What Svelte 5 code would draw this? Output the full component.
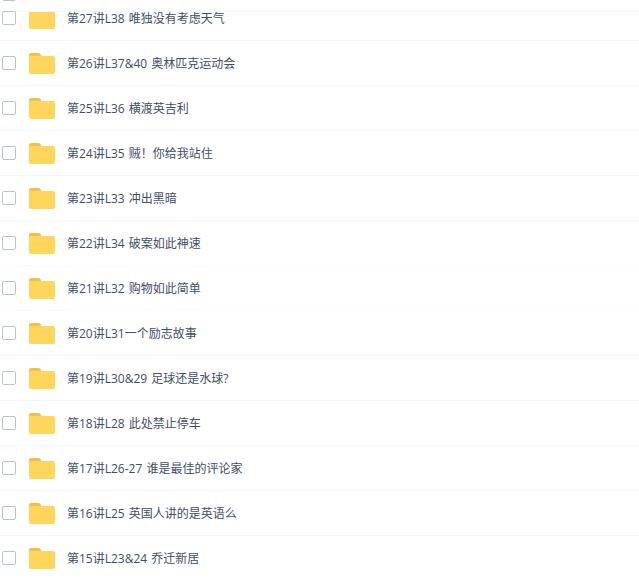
<script lang="ts">
	const lessons = [
		'第27讲L38 唯独没有考虑天气',
		'第26讲L37&40 奥林匹克运动会',
		'第25讲L36 横渡英吉利',
		'第24讲L35 贼！你给我站住',
		'第23讲L33 冲出黑暗',
		'第22讲L34 破案如此神速',
		'第21讲L32 购物如此简单',
		'第20讲L31一个励志故事',
		'第19讲L30&29 足球还是水球?',
		'第18讲L28 此处禁止停车',
		'第17讲L26-27 谁是最佳的评论家',
		'第16讲L25 英国人讲的是英语么',
		'第15讲L23&24 乔迁新居'
	];
</script>

<div class="page">
	<div class="top-bar"><span class="checkbox"></span></div>
	<ul class="list">
		{#each lessons as name}
			<li class="row">
				<span class="checkbox"></span>
				<svg class="folder" width="26" height="21" viewBox="0 0 26 21">
					<path d="M0 2a2 2 0 0 1 2-2h7a3 3 0 0 1 3 3v1H0z" fill="#f0bf50" />
					<path d="M0 5a2 2 0 0 1 2-2h22a2 2 0 0 1 2 2v14a2 2 0 0 1-2 2H2a2 2 0 0 1-2-2z" fill="#ffd65c" />
				</svg>
				<span class="name">{name}</span>
			</li>
		{/each}
	</ul>
</div>

<style>
	:global(body) {
		background: #fff;
	}

	.page {
		position: relative;
		height: 579px;
		overflow: hidden;
		font-family: 'Open Sans', 'Noto Sans CJK SC', sans-serif;
	}

	.top-bar {
		position: absolute;
		top: 0;
		left: 0;
		right: 0;
		height: 11px;
		background: #fff;
		border-bottom: 1px solid #f2f6fd;
		overflow: hidden;
		z-index: 1;
	}

	.top-bar .checkbox {
		display: block;
		margin: -13px 0 0 2px;
	}

	.list {
		list-style: none;
		margin: -4px 0 0;
		padding: 0;
	}

	.row {
		display: flex;
		align-items: center;
		height: 44px;
		border-bottom: 1px solid #f2f6fd;
		padding-left: 2px;
	}

	.row .checkbox {
		position: relative;
		z-index: 2;
	}

	.checkbox {
		box-sizing: border-box;
		flex: none;
		width: 14px;
		height: 14px;
		border: 1px solid #b8c4d6;
		border-radius: 2px;
		background: #fff;
	}

	.folder {
		flex: none;
		margin: 1px 0 0 13px;
	}

	.name {
		margin-left: 12px;
		font-size: 12px;
		color: #424e67;
		white-space: pre;
		word-spacing: 1px;
	}
</style>
